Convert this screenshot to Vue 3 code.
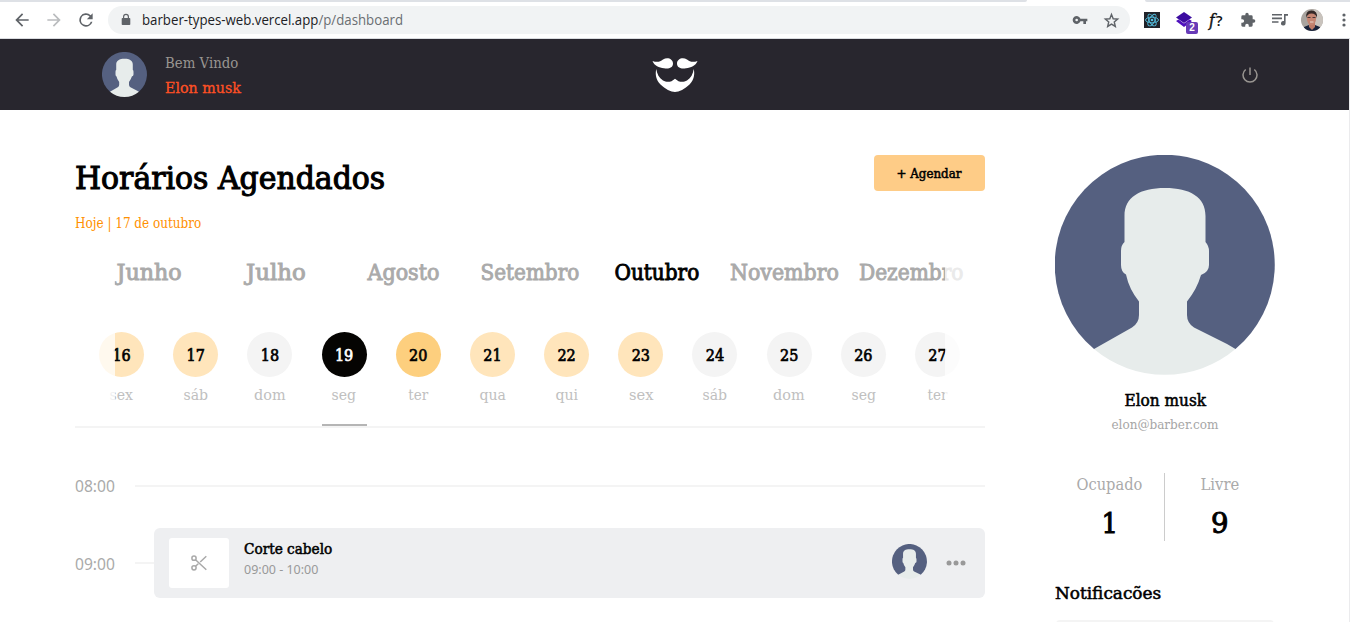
<script setup>
import { h } from 'vue'

const months = [
  { name: 'Junho', w: 65 },
  { name: 'Julho', w: 60 },
  { name: 'Agosto', w: 72 },
  { name: 'Setembro', w: 99 },
  { name: 'Outubro', w: 85, active: true },
  { name: 'Novembro', w: 109 },
  { name: 'Dezembro', w: 105 },
]

const days = [
  { n: 16, label: 'sex', w: 24, tone: 'some' },
  { n: 17, label: 'sáb', w: 25, tone: 'some' },
  { n: 18, label: 'dom', w: 32, tone: 'free' },
  { n: 19, label: 'seg', w: 25, tone: 'active' },
  { n: 20, label: 'ter', w: 20, tone: 'busy' },
  { n: 21, label: 'qua', w: 26, tone: 'some' },
  { n: 22, label: 'qui', w: 23, tone: 'some' },
  { n: 23, label: 'sex', w: 25, tone: 'some' },
  { n: 24, label: 'sáb', w: 25, tone: 'free' },
  { n: 25, label: 'dom', w: 32, tone: 'free' },
  { n: 26, label: 'seg', w: 25, tone: 'free' },
  { n: 27, label: 'ter', w: 20, tone: 'free' },
]

// Condenses a label horizontally to the given width in pixels.
const vFit = {
  mounted(el, { value }) {
    const natural = el.offsetWidth
    if (natural) el.style.transform = `scaleX(${value / natural})`
  },
}

const Avatar = () =>
  h('svg', { viewBox: '0 0 220 220' }, [
    h('path', { d: 'M39 194A110 110 0 1 1 180.500 194Z', fill: '#556080' }),
    h('path', {
      fill: '#e7eceb',
      d: 'M39 194L77 172.500Q84 168 84 160V146.500Q74 134 71 119.500Q66 117 66 110V96Q66 90 69.500 87V61C69.500 42 85 33 110 33S150.500 42 150.500 61V87Q154 91 154 96V110Q154 117 146 120Q142 134 132 146.500V160Q132 168 139 172.500L172 189L180.500 194A110 110 0 0 1 39 194Z',
    }),
  ])
</script>

<template>
  <div class="page">
    <div class="tabstrip"><i class="tab-left"></i><i class="tab-right"></i></div>
    <div class="toolbar">
      <svg class="nav" viewBox="0 0 24 24"><path fill="#5f6368" d="M20 11H7.800l5.600-5.600L12 4l-8 8 8 8 1.400-1.400L7.800 13H20z" /></svg>
      <svg class="nav" viewBox="0 0 24 24"><path fill="#babcbe" d="M12 4l-1.400 1.400 5.600 5.600H4v2h12.200l-5.600 5.600L12 20l8-8z" /></svg>
      <svg class="nav" viewBox="0 0 24 24"><path fill="#5f6368" d="M17.650 6.350A8 8 0 1 0 19.730 14h-2.080A6 6 0 1 1 12 6c1.660 0 3.140.69 4.220 1.780L13 11h7V4z" /></svg>
      <div class="address">
        <svg class="lock" viewBox="0 0 12 14"><path fill="#5f6368" fill-rule="evenodd" d="M3 5V3.700a3 3 0 0 1 6 0V5h.500q.800 0 .800.800v5.400q0 .800-.800.800h-7q-.800 0-.800-.800V5.800q0-.800.800-.800zM4.200 5h3.600V3.700a1.800 1.800 0 0 0-3.600 0z" /></svg>
        <span v-fit="261" class="url">barber-types-web.vercel.app<em>/p/dashboard</em></span>
        <svg class="key" viewBox="0 0 24 24"><path fill="#5f6368" fill-rule="evenodd" d="M12.650 10A6 6 0 1 0 12.650 14H17v4h4v-4h2v-4zM7 14a2 2 0 1 1 0-4 2 2 0 0 1 0 4z" /></svg>
        <svg class="star" viewBox="0 0 24 24"><path fill="none" stroke="#5f6368" stroke-width="2" d="M12 3.500l2.400 6 6.300.5-4.800 4.100 1.500 6.200L12 17l-5.400 3.300 1.500-6.200L3.300 10l6.300-.5z" /></svg>
      </div>
      <div class="extensions">
        <svg class="react" viewBox="0 0 16 16">
          <rect width="16" height="16" fill="#20232a" />
          <g fill="none" stroke="#53bfe0" stroke-width=".9">
            <ellipse cx="8" cy="8" rx="6.500" ry="2.800" />
            <ellipse cx="8" cy="8" rx="6.500" ry="2.800" transform="rotate(60 8 8)" />
            <ellipse cx="8" cy="8" rx="6.500" ry="2.800" transform="rotate(120 8 8)" />
          </g>
          <circle cx="8" cy="8" r="1.300" fill="#53bfe0" />
        </svg>
        <div class="layers">
          <svg viewBox="0 0 17 17"><path fill="#3c0ca0" d="M8 0l8 5.500-8 5.500-8-5.500z" /><path fill="#4e10bd" d="M0 9l2.500-1.500L8 11.500l5.500-4L16 9l-8 6z" /></svg>
          <b>2</b>
        </div>
        <span class="fq"><i>f</i>?</span>
        <svg class="puzzle" viewBox="0 0 24 24"><path fill="#5f6368" d="M20.500 11H19V7a2 2 0 0 0-2-2h-4V3.500a2.500 2.500 0 0 0-5 0V5H4a2 2 0 0 0-2 2v3.800h1.500a2.700 2.700 0 0 1 0 5.400H2V20c0 1.100.9 2 2 2h3.800v-1.500a2.700 2.700 0 0 1 5.400 0V22H17a2 2 0 0 0 2-2v-4h1.500a2.500 2.500 0 0 0 0-5z" /></svg>
        <svg class="queue" viewBox="0 0 17 14"><path fill="#5f6368" d="M0 1h10v1.600H0zM0 4.600h10v1.600H0zM0 8.200h6.500v1.600H0zM12 1h4v1.700h-2.400v7.600a2.300 2.300 0 1 1-1.600-2.200z" /></svg>
        <svg class="photo" viewBox="0 0 22 22">
          <defs><clipPath id="face"><circle cx="11" cy="11" r="11" /></clipPath></defs>
          <g clip-path="url(#face)">
            <rect width="22" height="22" fill="#a9a49f" />
            <rect x="13" width="9" height="22" fill="#c9c3bd" />
            <path fill="#18223a" d="M1 22l2-4 5-2h6l5 2 2 4z" />
            <path fill="#bd7b68" d="M8 14h6v4l-3 3-3-3z" />
            <ellipse cx="10.500" cy="9.500" rx="4.600" ry="6.700" fill="#c58572" />
            <path fill="#352928" d="M5.500 9Q4 1.500 10.500 1.500T15.800 9Q15 4.500 10.500 4.500T5.500 9z" />
            <path stroke="#493536" d="M6.500 8.500h3m2 0h3" />
            <path stroke="#ead6cb" d="M9 13h3.500" />
          </g>
        </svg>
        <svg class="kebab" viewBox="0 0 4 14"><g fill="#5f6368"><circle cx="2" cy="2" r="1.600" /><circle cx="2" cy="7" r="1.600" /><circle cx="2" cy="12" r="1.600" /></g></svg>
      </div>
    </div>

    <header class="header">
      <div class="user">
        <Avatar class="avatar-md" />
        <div class="greeting">
          <span v-fit="73" class="t left welcome">Bem Vindo</span>
          <span v-fit="76" class="t left med username">Elon musk</span>
        </div>
      </div>
      <svg class="logo" viewBox="0 0 46 34">
        <g fill="#fff">
          <path d="M.5 3C5 4.500 8 4 11 1.500 15 -1.300 21 .5 21 5.500 21 10 16.500 11 12 10.200 7 9.800 2.500 8 .5 3z" />
          <path d="M45.500 3C41 4.500 38 4 35 1.500 31 -1.300 25 .5 25 5.500 25 10 29.500 11 34 10.200 39 9.800 43.500 8 45.500 3z" />
          <path d="M4.300 11C3 16 4 22 8.500 26.500 13 31 19 34 23 34S33 31 37.500 26.500C42 22 43 16 41.700 11 41 16 39 20 35 22.500 32 24.300 29 24 26.500 23.200L23 20.700 19.500 23.200C17 24 14 24.300 11 22.500 7 20 5 16 4.300 11z" />
        </g>
      </svg>
      <svg class="power" viewBox="0 0 16 16"><path fill="none" stroke="#999591" stroke-width="1.500" d="M8 .5v7.500M3.700 2.500a7 7 0 1 0 8.600 0" /></svg>
    </header>

    <main class="main">
      <section class="schedule">
        <div class="heading">
          <div class="titles">
            <h1 v-fit="310" class="t left title">Horários Agendados</h1>
            <span v-fit="126" class="t left today">Hoje | 17 de outubro</span>
          </div>
          <button class="add"><span v-fit="65" class="t med">+ Agendar</span></button>
        </div>

        <div class="calendar">
          <div class="months">
            <div v-for="m in months" :key="m.name" class="month" :class="{ current: m.active }">
              <span v-fit="m.w" class="t">{{ m.name }}</span>
            </div>
          </div>
          <div class="days">
            <div v-for="d in days" :key="d.n" class="day" :class="d.tone">
              <div class="disc"><span v-fit="18" class="t">{{ d.n }}</span></div>
              <div class="weekday"><span v-fit="d.w" class="t">{{ d.label }}</span></div>
            </div>
          </div>
          <i class="fade fade-left"></i>
          <i class="fade fade-right"></i>
        </div>

        <div class="slot">
          <span v-fit="40" class="hour">08:00</span>
          <i class="rule"></i>
        </div>
        <div class="slot booked">
          <span v-fit="40" class="hour">09:00</span>
          <i class="stub"></i>
          <article class="card">
            <div class="service-icon">
              <svg viewBox="0 0 16 16" fill="none" stroke="#a9a9a9" stroke-width="1.500">
                <circle cx="3" cy="3.200" r="2.100" /><circle cx="3" cy="12.800" r="2.100" />
                <path d="M4.500 4.700L15.300 14.800M4.500 11.300L7.300 8.700M9.200 7L15.300 1.200" />
              </svg>
            </div>
            <div class="service">
              <span v-fit="88" class="t left med service-name">Corte cabelo</span>
              <span v-fit="74" class="left service-time">09:00 - 10:00</span>
            </div>
            <Avatar class="avatar-sm" />
            <svg class="more" viewBox="0 0 20 6"><g fill="#999"><circle cx="3" cy="3" r="2.500" /><circle cx="10" cy="3" r="2.500" /><circle cx="17" cy="3" r="2.500" /></g></svg>
          </article>
        </div>
      </section>

      <aside class="profile">
        <Avatar class="avatar-lg" />
        <span v-fit="82" class="t med name">Elon musk</span>
        <span v-fit="107" class="t email">elon@barber.com</span>
        <div class="stats">
          <div class="stat busy-count"><span v-fit="66" class="t">Ocupado</span><strong v-fit="16" class="t">1</strong></div>
          <div class="stat"><span v-fit="39" class="t">Livre</span><strong v-fit="17" class="t">9</strong></div>
        </div>
        <h2 v-fit="106" class="t left med notices">Notificacões</h2>
        <div class="notice-box"></div>
      </aside>
    </main>
  </div>
</template>

<style>
body { margin: 0; overflow: hidden; }
</style>

<style scoped>
* { box-sizing: border-box; }
.page { position: relative; width: 1350px; height: 622px; overflow: hidden; background: #fff; font-family: "Roboto Slab", "DejaVu Serif Condensed", "DejaVu Serif", serif; color: #000; }
.page::after { content: ""; position: absolute; right: 0; top: 39px; width: 1px; height: 583px; background: #ebebed; }
svg { display: block; flex: none; }
.t, .hour, .url, .service-time { display: inline-block; white-space: nowrap; font-weight: 400; margin: 0; }
.left { transform-origin: left; align-self: flex-start; }
.med { -webkit-text-stroke: .5px currentColor; }

.tabstrip { display: flex; justify-content: space-between; height: 2px; }
.tab-left { width: 1027px; background: #dee1e6; border-bottom-right-radius: 3px; }
.tab-right { width: 205px; background: #dee1e6; border-bottom-left-radius: 3px; }
.toolbar { display: flex; align-items: center; height: 37px; padding-left: 12px; border-bottom: 1px solid #dadce0; }
.nav { width: 20px; height: 20px; margin-right: 12px; }
.address { display: flex; align-items: center; width: 1022px; height: 28px; padding: 0 10px 0 12px; border-radius: 14px; background: #f1f3f4; }
.lock { width: 12px; height: 14px; margin-right: 10px; }
.url { font: 14px/20px "Open Sans", "Noto Sans", sans-serif; color: #202124; transform-origin: left; }
.url em { font-style: normal; color: #6a6e72; }
.key { width: 16px; height: 16px; margin-left: auto; }
.star { width: 17px; height: 17px; margin-left: 15px; }
.extensions { display: flex; align-items: center; margin-left: 14px; }
.react { width: 16px; height: 16px; }
.layers { position: relative; margin-left: 16px; width: 22px; height: 17px; }
.layers svg { width: 17px; height: 17px; }
.layers b { position: absolute; left: 10px; top: 10px; width: 12px; height: 12px; border-radius: 2px; background: #673ab7; color: #fff; font: 700 10px/12px "Liberation Sans", sans-serif; text-align: center; }
.fq { width: 18px; margin-left: 11px; font: 600 15px/18px "Open Sans", sans-serif; color: #111; white-space: nowrap; }
.fq i { margin-right: 1px; font: italic 400 17px/18px "DejaVu Serif Condensed", serif; -webkit-text-stroke: .4px currentColor; }
.puzzle { width: 16px; height: 16px; margin-left: 13px; }
.queue { width: 17px; height: 14px; margin-left: 16px; }
.photo { width: 22px; height: 22px; margin-left: 12px; }
.kebab { width: 4px; height: 14px; margin-left: 19px; }

.header { display: flex; align-items: center; height: 71px; padding: 0 92px 0 102px; background: #28262e; }
.user { display: flex; gap: 18px; width: 157px; }
.avatar-md { width: 45px; height: 45px; }
.greeting { display: flex; flex-direction: column; padding-top: 1px; }
.greeting .t { line-height: 20px; }
.welcome { font-size: 14px; color: #999591; }
.username { margin-top: 5px; font-size: 15px; color: #ff5024; -webkit-text-stroke-width: .3px; }
.logo { width: 46px; height: 34px; margin-left: 392.5px; }
.power { width: 16px; height: 16px; margin-left: auto; }

.main { display: flex; gap: 70px; padding: 45px 0 0 75px; }
.schedule { width: 910px; }
.heading { display: flex; justify-content: space-between; height: 90px; }
.titles { display: flex; flex-direction: column; padding-top: 3px; margin-left: -.5px; }
.title { font-size: 31px; line-height: 40px; -webkit-text-stroke: 1px currentColor; }
.today { margin-top: 15px; font-size: 14px; line-height: 20px; color: #ff9000; }
.add { width: 111px; height: 36px; padding: 1px 2px 0 0; border: 0; border-radius: 4px; background: #fecc87; font: 13px/36px "DejaVu Serif Condensed", serif; color: #000; display: flex; justify-content: center; }

.calendar { position: relative; height: 183px; padding: 0 10.5px 0 9.5px; border-bottom: 2px solid #f4f4f4; }
.months { display: flex; height: 87px; padding: 13px 0 0 1px; }
.month { flex: 1; text-align: center; font-size: 22px; line-height: 30px; color: #aaa; }
.month .t { -webkit-text-stroke: .85px currentColor; }
.month.current { color: #000; }
.days { display: flex; }
.day { flex: 1; display: flex; flex-direction: column; align-items: center; height: 94px; }
.disc { width: 45px; height: 45px; padding-top: 1px; border-radius: 50%; text-align: center; font-size: 16px; line-height: 45px; background: #f4f4f4; }
.disc .t { -webkit-text-stroke: .65px currentColor; }
.some .disc { background: #ffe5bb; }
.busy .disc { background: #fdcf7e; }
.active .disc { background: #050402; color: #fff; }
.weekday { margin-top: 8px; height: 41px; width: 45px; text-align: center; font-size: 15px; line-height: 20px; color: #c0c0c0; }
.active .weekday { border-bottom: 2px solid #b5b5b5; }
.fade { position: absolute; top: 0; bottom: 4px; width: 30px; background: rgba(255, 255, 255, .75); }
.fade-left { left: 10px; }
.fade-right { right: 10px; }

.slot { display: flex; align-items: center; height: 20px; margin-top: 48px; }
.hour { flex: none; margin: 0 auto 0 -.5px; font: 16px/20px "Noto Sans", sans-serif; color: #aaa; transform-origin: left; }
.rule { width: 850px; height: 2px; background: #f4f4f4; }
.booked { height: 70px; margin-top: 32px; }
.booked .hour { margin-top: 2px; }
.stub { width: 19px; height: 2px; background: #f4f4f4; }
.card { display: flex; width: 831px; height: 70px; padding: 10px 19px 10px 15px; border-radius: 6px; background: #eeeff1; }
.service-icon { display: grid; place-items: center; width: 60px; height: 50px; border-radius: 3px; background: #fff; }
.service-icon svg { width: 16px; height: 16px; }
.service { display: flex; flex-direction: column; flex: 1; padding-left: 15px; }
.service-name { margin-top: 1px; font-size: 15px; line-height: 20px; }
.service-time { font: 13px/20px "Noto Sans", sans-serif; color: #999; }
.avatar-sm { width: 35px; height: 35px; margin: 6px 19px 0 0; }
.more { width: 20px; height: 6px; margin-top: 22px; }

.profile { display: flex; flex-direction: column; align-items: center; width: 220px; }
.avatar-lg { width: 220px; height: 220px; }
.name { margin: 16px 0 0; font-size: 16px; line-height: 20px; }
.email { margin: 4px 1px 0 0; font-size: 13px; line-height: 20px; color: #a6a6a6; }
.stats { display: flex; width: 220px; height: 68px; margin-top: 38px; }
.stat { display: flex; flex-direction: column; align-items: center; flex: 1; }
.busy-count { flex: none; width: 110px; border-right: 1px solid #ccc; }
.stat span { margin-top: 2px; font-size: 16px; line-height: 20px; color: #aaa; }
.stat strong { margin-top: 14px; font-size: 27px; line-height: 30px; -webkit-text-stroke: .9px currentColor; }
.notices { margin: 40px 0 0 -.5px; font-size: 17px; line-height: 24px; }
.notice-box { width: 218px; height: 20px; margin-top: 15px; border-radius: 4px; background: #f4f4f4; }
</style>
